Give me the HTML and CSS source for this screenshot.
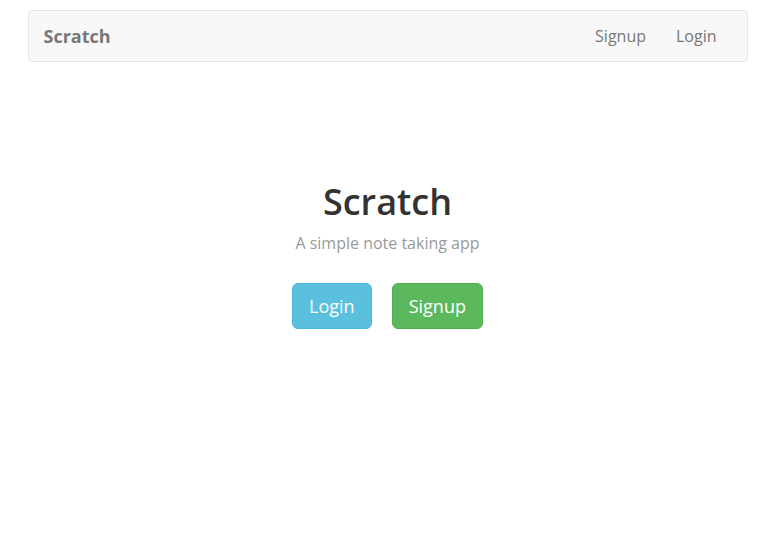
FILE: index.html
```html
<!DOCTYPE html>
<html lang="en">
<head>
    <meta charset="UTF-8">
    <meta name="viewport" content="width=device-width, initial-scale=1.0">
    <title>Scratch</title>
    <link rel="stylesheet" href="styles.css">
</head>
<body>
    <div class="container">
        <nav class="navbar">
            <a class="navbar-brand" href="#">Scratch</a>
            <ul class="nav">
                <li><a href="#">Signup</a></li>
                <li><a href="#">Login</a></li>
            </ul>
        </nav>
        <div class="lander">
            <h1>Scratch</h1>
            <p>A simple note taking app</p>
            <div class="actions">
                <a href="#" class="btn btn-info">Login</a>
                <a href="#" class="btn btn-success">Signup</a>
            </div>
        </div>
    </div>
</body>
</html>
```

FILE: styles.css
```css
body {
    font-family: "Open Sans", sans-serif;
    font-size: 16px;
    line-height: 1.42857;
    color: #333;
    margin: 0;
    padding: 0;
    background: #fff;
}

a {
    text-decoration: none;
}

.container {
    width: 720px;
    margin: 0 auto;
    padding: 10px 15px 0;
}

.navbar {
    display: flex;
    justify-content: space-between;
    align-items: center;
    height: 50px;
    margin-bottom: 20px;
    padding: 0 15px;
    background-color: #f8f8f8;
    border: 1px solid #e7e7e7;
    border-radius: 4px;
}

.navbar-brand {
    padding: 15px 0;
    font-size: 18px;
    font-weight: bold;
    line-height: 20px;
    color: #777;
}

.nav {
    display: flex;
    list-style: none;
    margin: 0;
    padding: 0;
}

.nav a {
    display: block;
    padding: 15px;
    line-height: 20px;
    color: #777;
}

.lander {
    padding: 80px 0;
    text-align: center;
}

.lander h1 {
    margin: 20px 0 10px;
    font-size: 36px;
    font-weight: 600;
    line-height: 1.1;
}

.lander p {
    margin: 0 0 10px;
    color: #999;
}

.actions {
    display: flex;
    justify-content: center;
    gap: 20px;
    padding-top: 19px;
}

.btn {
    display: inline-block;
    padding: 10px 16px;
    font-size: 18px;
    line-height: 1.3333;
    border: 1px solid transparent;
    border-radius: 6px;
    color: #fff;
}

.btn-info {
    background-color: #5bc0de;
    border-color: #46b8da;
}

.btn-success {
    background-color: #5cb85c;
    border-color: #4cae4c;
}
```
